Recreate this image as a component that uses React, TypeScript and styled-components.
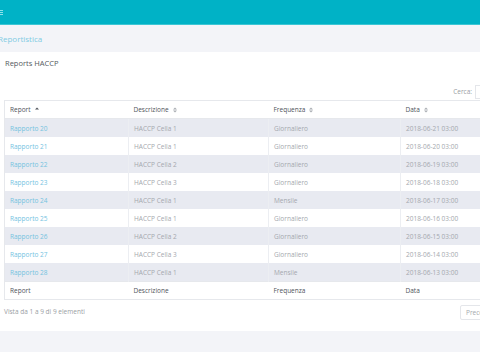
import React from "react";
import styled, { createGlobalStyle } from "styled-components";

const GlobalStyle = createGlobalStyle`
  html, body {
    margin: 0;
    padding: 0;
    background: #ffffff;
    overflow: hidden;
  }
  body {
    font-family: "Open Sans", "Liberation Sans", sans-serif;
    width: 480px;
  }
`;

const Page = styled.div`
  width: 480px;
  height: 360px;
  overflow: hidden;
  background: #ffffff;
`;

const TopBar = styled.div`
  height: 24px;
  background: #00b2c6;
  border-bottom: 1px solid #3cc6d4;
  display: flex;
  align-items: center;
`;

const Burger = styled.div`
  margin-left: -3px;
  width: 6px;
  display: flex;
  flex-direction: column;
  gap: 1px;

  span {
    display: block;
    height: 1px;
    background: #8fe0ea;
  }
`;

const Breadcrumb = styled.div`
  height: 27px;
  background: #f3f4f8;
  display: flex;
  align-items: center;
`;

const CrumbText = styled.span`
  margin-left: -2px;
  font-size: 8px;
  color: #7fcbe3;
`;

const Card = styled.div`
  background: #ffffff;
  height: 279px;
  display: flex;
  flex-direction: column;
`;

const CardTitle = styled.div`
  font-size: 7.5px;
  color: #555a60;
  padding: 6px 0 0 5px;
  height: 14px;
`;

const SearchRow = styled.div`
  display: flex;
  justify-content: flex-end;
  align-items: center;
  height: 13px;
  margin-top: 13px;
`;

const SearchLabel = styled.span`
  font-size: 6.5px;
  color: #9a9ea4;
  margin-right: 3px;
`;

const SearchInput = styled.div`
  width: 4px;
  height: 12px;
  border: 1px solid #e4e6ea;
  border-right: none;
`;

const TableWrap = styled.div`
  margin: 2px 0 0 4px;
  width: 520px;
`;

const Table = styled.table`
  border-collapse: collapse;
  width: 520px;
  table-layout: fixed;
  border: 1px solid #e6e8ec;
  font-size: 6.5px;
`;

const HeadCell = styled.th`
  text-align: left;
  font-weight: normal;
  color: #4f545a;
  height: 17px;
  padding: 0 0 0 5px;
  border-bottom: 1px solid #e6e8ec;
  white-space: nowrap;
`;

const FootCell = styled.td`
  text-align: left;
  color: #4f545a;
  height: 17px;
  padding: 0 0 0 5px;
  border-top: 1px solid #e6e8ec;
`;

const Row = styled.tr<{ $striped: boolean }>`
  background: ${(p) => (p.$striped ? "#e8eaf1" : "#ffffff")};
`;

const Cell = styled.td<{ $link?: boolean }>`
  height: 18px;
  padding: 0 0 0 5px;
  color: ${(p) => (p.$link ? "#74c3df" : "#a4a8ae")};
  border-left: 1px solid #eceef2;
  white-space: nowrap;

  &:first-child {
    border-left: none;
  }
`;

const Info = styled.div`
  font-size: 6.5px;
  color: #9a9ea4;
  padding: 7px 0 0 4px;
  display: flex;
  justify-content: space-between;
  align-items: flex-start;
`;

const PrevButton = styled.div`
  height: 15px;
  width: 30px;
  margin-right: -10px;
  margin-top: -2px;
  border: 1px solid #e4e6ea;
  border-radius: 2px;
  display: flex;
  align-items: center;
  padding-left: 5px;
  color: #a4a8ae;
  font-size: 6.5px;
  box-sizing: border-box;
`;

const Bottom = styled.div`
  height: 21px;
  background: #f3f4f8;
`;

const SortIcon = ({ active }: { active?: boolean }) => (
  <svg
    width="4"
    height="6"
    viewBox="0 0 4 6"
    style={{ marginLeft: 4, verticalAlign: "middle" }}
  >
    <path d="M0 2.4 L2 0.4 L4 2.4 Z" fill={active ? "#4f545a" : "#a8acb2"} />
    {!active && <path d="M0 3.6 L2 5.6 L4 3.6 Z" fill="#a8acb2" />}
  </svg>
);

const rows = [
  ["Rapporto 20", "HACCP Cella 1", "Giornaliero", "2018-06-21 03:00"],
  ["Rapporto 21", "HACCP Cella 1", "Giornaliero", "2018-06-20 03:00"],
  ["Rapporto 22", "HACCP Cella 2", "Giornaliero", "2018-06-19 03:00"],
  ["Rapporto 23", "HACCP Cella 3", "Giornaliero", "2018-06-18 03:00"],
  ["Rapporto 24", "HACCP Cella 1", "Mensile", "2018-06-17 03:00"],
  ["Rapporto 25", "HACCP Cella 1", "Giornaliero", "2018-06-16 03:00"],
  ["Rapporto 26", "HACCP Cella 2", "Giornaliero", "2018-06-15 03:00"],
  ["Rapporto 27", "HACCP Cella 3", "Giornaliero", "2018-06-14 03:00"],
  ["Rapporto 28", "HACCP Cella 1", "Mensile", "2018-06-13 03:00"],
];

const columns = ["Report", "Descrizione", "Frequenza", "Data"];
const widths = [124, 140, 132, 124];

const App: React.FC = () => {
  return (
    <Page>
      <GlobalStyle />
      <TopBar>
        <Burger>
          <span />
          <span />
          <span />
        </Burger>
      </TopBar>
      <Breadcrumb>
        <CrumbText>Reportistica</CrumbText>
      </Breadcrumb>
      <Card>
        <CardTitle>Reports HACCP</CardTitle>
        <SearchRow>
          <SearchLabel>Cerca:</SearchLabel>
          <SearchInput />
        </SearchRow>
        <TableWrap>
          <Table>
            <colgroup>
              {widths.map((w, i) => (
                <col key={i} style={{ width: w }} />
              ))}
            </colgroup>
            <thead>
              <tr>
                {columns.map((c, i) => (
                  <HeadCell key={c}>
                    {c}
                    <SortIcon active={i === 0} />
                  </HeadCell>
                ))}
              </tr>
            </thead>
            <tbody>
              {rows.map((r, i) => (
                <Row key={r[0]} $striped={i % 2 === 0}>
                  {r.map((v, j) => (
                    <Cell key={j} $link={j === 0}>
                      {v}
                    </Cell>
                  ))}
                </Row>
              ))}
            </tbody>
            <tfoot>
              <tr>
                {columns.map((c) => (
                  <FootCell key={c}>{c}</FootCell>
                ))}
              </tr>
            </tfoot>
          </Table>
        </TableWrap>
        <Info>
          <span>Vista da 1 a 9 di 9 elementi</span>
          <PrevButton>Precedente</PrevButton>
        </Info>
      </Card>
      <Bottom />
    </Page>
  );
};

export default App;
